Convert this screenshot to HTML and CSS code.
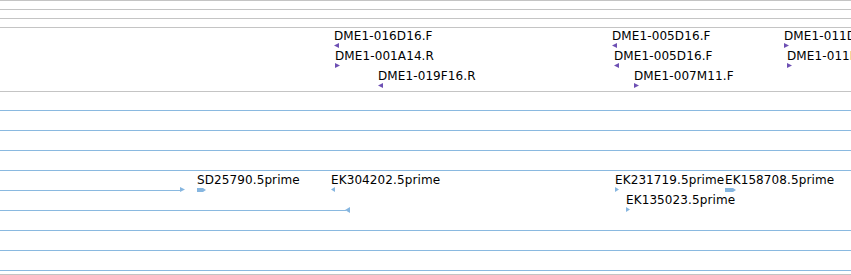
FILE: index.html
```html
<!DOCTYPE html>
<html lang="en">
<head>
  <meta charset="UTF-8">
  <title>Tracks</title>
  <link rel="stylesheet" href="styles.css">
</head>
<body>
  <div class="browser">
    <div class="track thin"></div>
    <div class="track thin"></div>
    <div class="track thin"></div>

    <!-- clone ends -->
    <div class="track dme">
      <div class="lane">
        <div class="feat" style="left: 334px">
          <span class="label">DME1-016D16.F</span>
          <svg class="glyph purple" width="5" height="5"><polygon points="5,0 0,2.5 5,5"/></svg>
        </div>
        <div class="feat" style="left: 612px">
          <span class="label">DME1-005D16.F</span>
          <svg class="glyph purple" width="5" height="5"><polygon points="5,0 0,2.5 5,5"/></svg>
        </div>
        <div class="feat" style="left: 784px">
          <span class="label">DME1-011D09.R</span>
          <svg class="glyph purple" width="5" height="5"><polygon points="0,0 5,2.5 0,5"/></svg>
        </div>
      </div>
      <div class="lane">
        <div class="feat" style="left: 335px">
          <span class="label">DME1-001A14.R</span>
          <svg class="glyph purple" width="5" height="5"><polygon points="0,0 5,2.5 0,5"/></svg>
        </div>
        <div class="feat" style="left: 614px">
          <span class="label">DME1-005D16.F</span>
          <svg class="glyph purple" width="5" height="5"><polygon points="5,0 0,2.5 5,5"/></svg>
        </div>
        <div class="feat" style="left: 787px">
          <span class="label">DME1-011B12.R</span>
          <svg class="glyph purple" width="5" height="5"><polygon points="0,0 5,2.5 0,5"/></svg>
        </div>
      </div>
      <div class="lane">
        <div class="feat" style="left: 378px">
          <span class="label">DME1-019F16.R</span>
          <svg class="glyph purple" width="5" height="5"><polygon points="5,0 0,2.5 5,5"/></svg>
        </div>
        <div class="feat" style="left: 634px">
          <span class="label">DME1-007M11.F</span>
          <svg class="glyph purple" width="5" height="5"><polygon points="0,0 5,2.5 0,5"/></svg>
        </div>
      </div>
    </div>

    <!-- ests -->
    <div class="track est">
      <div class="lane"><div class="bar full"></div></div>
      <div class="lane"><div class="bar full"></div></div>
      <div class="lane"><div class="bar full"></div></div>
      <div class="lane"><div class="bar full"></div></div>
      <div class="lane">
        <div class="bar" style="width: 180px"></div>
        <svg class="tip blue" style="left: 180px" width="5" height="5"><polygon points="0,0 5,2.5 0,5"/></svg>
        <div class="feat" style="left: 197px">
          <span class="label">SD25790.5prime</span>
          <svg class="glyph blue thick" width="9" height="4"><polygon points="0,0 6,0 9,2 6,4 0,4"/></svg>
        </div>
        <div class="feat" style="left: 331px">
          <span class="label">EK304202.5prime</span>
          <svg class="glyph blue" width="4" height="5"><polygon points="4,0 0,2.5 4,5"/></svg>
        </div>
        <div class="feat" style="left: 615px">
          <span class="label">EK231719.5prime</span>
          <svg class="glyph blue" width="4" height="5"><polygon points="0,0 4,2.5 0,5"/></svg>
        </div>
        <div class="feat" style="left: 725px">
          <span class="label">EK158708.5prime</span>
          <svg class="glyph blue thick" width="11" height="4"><polygon points="0,0 8,0 11,2 8,4 0,4"/></svg>
        </div>
      </div>
      <div class="lane">
        <div class="bar" style="width: 346px"></div>
        <svg class="tip tall blue" style="left: 345px" width="5" height="6"><polygon points="5,0 0,3 5,6"/></svg>
        <div class="feat" style="left: 626px">
          <span class="label">EK135023.5prime</span>
          <svg class="glyph blue" width="4" height="5"><polygon points="0,0 4,2.5 0,5"/></svg>
        </div>
      </div>
      <div class="lane"><div class="bar full"></div></div>
      <div class="lane"><div class="bar full"></div></div>
      <div class="lane"><div class="bar full"></div></div>
    </div>
  </div>
</body>
</html>
```

FILE: styles.css
```css
body { margin: 0; background: #fff; font-family: "DejaVu Sans", sans-serif; font-size: 12px; color: #000; }
.browser { width: 851px; height: 275px; overflow: hidden; }
.track { border-top: 1px solid #c4c4c4; position: relative; overflow: hidden; }
.thin { height: 8px; }
.dme { height: 63px; }
.est { height: 182px; border-bottom: 1px solid #c4c4c4; }
.lane { position: relative; height: 20px; }
.bar { position: absolute; left: 0; top: 18px; height: 1px; background: #8ab9e0; }
.bar.full { width: 100%; }
.feat { position: absolute; top: 0; display: flex; flex-direction: column; align-items: flex-start; white-space: nowrap; }
.label { line-height: 16px; height: 16px; letter-spacing: 0.1px; }
.glyph { display: block; margin-top: -1px; }
.glyph.thick { margin-top: 0; }
.tip { position: absolute; top: 15px; }
.tip.tall { top: 15px; }
.purple { fill: #6e50b4; }
.blue { fill: #86b6e0; }
```
